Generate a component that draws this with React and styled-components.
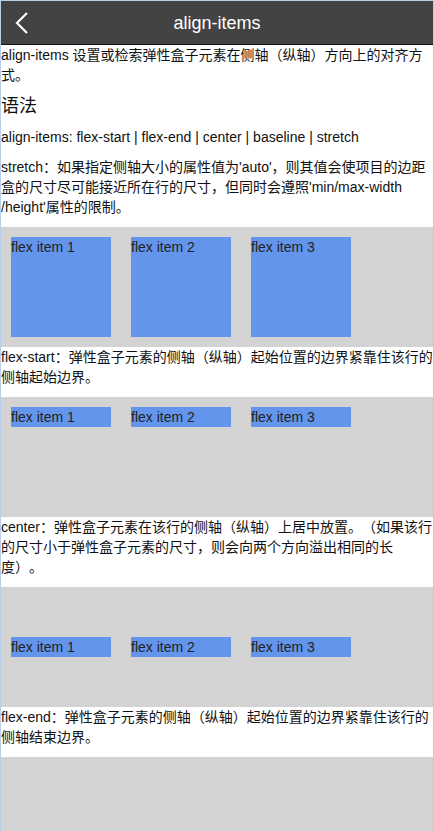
import React from "react";
import styled, { createGlobalStyle } from "styled-components";

const GlobalStyle = createGlobalStyle`
  html, body {
    margin: 0;
    padding: 0;
    background: #fff;
  }
  body {
    font-family: "Liberation Sans", "Noto Sans CJK SC", sans-serif;
    font-size: 14px;
    color: #111;
    text-spacing-trim: space-all;
  }
`;

const Page = styled.div`
  height: 100vh;
  box-sizing: border-box;
  border: 1px solid #b6cfec;
  border-bottom: none;
  display: flex;
  flex-direction: column;
  overflow: hidden;
`;

const Header = styled.header`
  flex: none;
  height: 43px;
  background: #434343;
  border-bottom: 1px solid #111;
  display: grid;
  grid-template-columns: 44px 1fr 44px;
  align-items: center;
`;

const BackButton = styled.button`
  background: none;
  border: none;
  padding: 0;
  height: 43px;
  display: flex;
  align-items: center;
  justify-content: center;
  cursor: pointer;
`;

const Title = styled.h1`
  margin: 0;
  padding-top: 2px;
  text-align: center;
  color: #fff;
  font-size: 18px;
  font-weight: normal;
`;

const Content = styled.main`
  flex: 1;
  overflow: hidden;
`;

const Text = styled.p`
  margin: 0 0 10px;
  line-height: 20px;
`;

const Heading = styled.h2`
  margin: 0 0 10px;
  font-size: 18px;
  line-height: 22px;
  font-weight: normal;
`;

const Demo = styled.div`
  display: flex;
  height: 120px;
  background: #d3d3d3;
  align-items: ${(p) => p.$align};
`;

const Item = styled.div`
  width: 100px;
  margin: 10px;
  background: #6495ed;
  line-height: 20px;
  color: #222;
`;

const DemoBox = ({ align }) => (
  <Demo $align={align}>
    <Item>flex item 1</Item>
    <Item>flex item 2</Item>
    <Item>flex item 3</Item>
  </Demo>
);

const Chevron = () => (
  <svg width="16" height="24" viewBox="0 0 16 24">
    <polyline
      points="12,2 2,12 12,22"
      fill="none"
      stroke="#fff"
      strokeWidth="2.2"
    />
  </svg>
);

export default function App() {
  return (
    <>
      <GlobalStyle />
      <Page>
        <Header>
          <BackButton aria-label="back">
            <Chevron />
          </BackButton>
          <Title>align-items</Title>
          <span />
        </Header>
        <Content>
          <Text>align-items 设置或检索弹性盒子元素在侧轴（纵轴）方向上的对齐方式。</Text>
          <Heading>语法</Heading>
          <Text>align-items: flex-start | flex-end | center | baseline | stretch</Text>
          <Text>
            stretch：如果指定侧轴大小的属性值为'auto'，则其值会使项目的边距盒的尺寸尽可能接近所在行的尺寸，但同时会遵照'min/max&#8209;width<wbr />/height'属性的限制。
          </Text>
          <DemoBox align="stretch" />
          <Text>flex-start：弹性盒子元素的侧轴（纵轴）起始位置的边界紧靠住该行的侧轴起始边界。</Text>
          <DemoBox align="flex-start" />
          <Text>
            center：弹性盒子元素在该行的侧轴（纵轴）上居中放置。（如果该行的尺寸小于弹性盒子元素的尺寸，则会向两个方向溢出相同的长度）。
          </Text>
          <DemoBox align="center" />
          <Text>flex-end：弹性盒子元素的侧轴（纵轴）起始位置的边界紧靠住该行的侧轴结束边界。</Text>
          <DemoBox align="flex-end" />
        </Content>
      </Page>
    </>
  );
}
